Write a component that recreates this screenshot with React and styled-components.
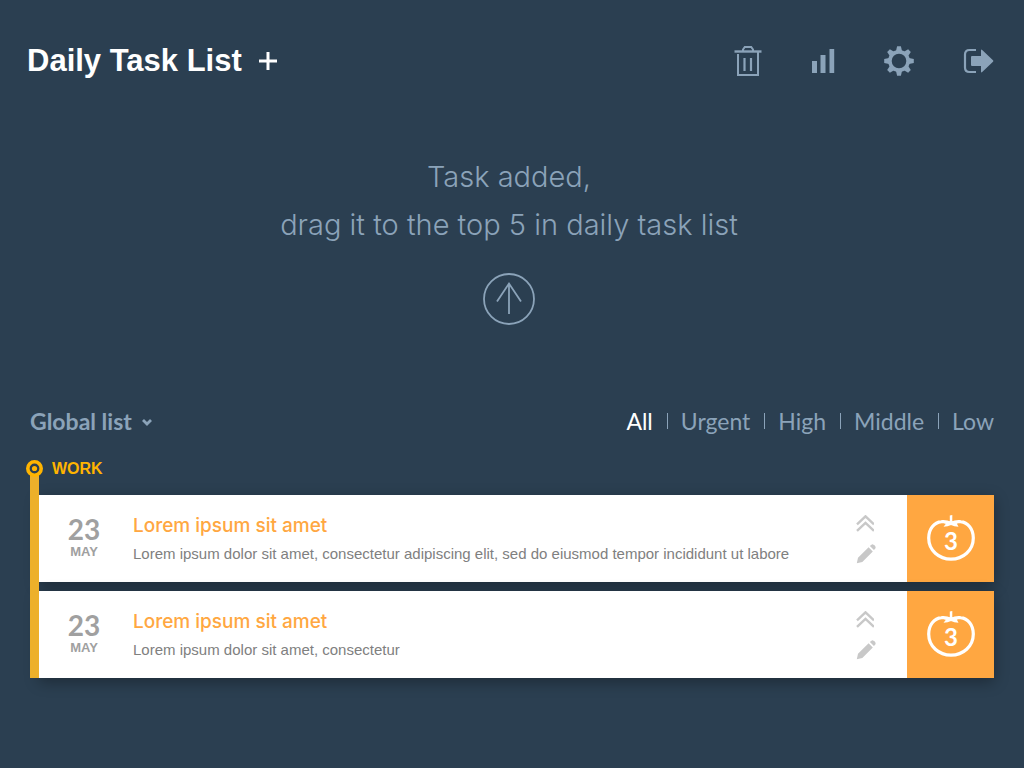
import React from 'react';
import styled, { createGlobalStyle } from 'styled-components';

const GlobalStyle = createGlobalStyle`
  *, *::before, *::after { box-sizing: border-box; }
  body { margin: 0; background: #2b3f51; font-family: "Liberation Sans", Arial, sans-serif; }
  h1, h2, h3, p, ul { margin: 0; padding: 0; }
  ul { list-style: none; }
  svg { display: block; }
  button { border: 0; padding: 0; background: none; color: inherit; font: inherit; cursor: pointer; }
`;

const Page = styled.div`
  min-height: 100vh;
  padding: 36px 30px 48px;
  background: #2b3f51;
  color: #8ba3b9;
`;

const Header = styled.header`
  display: flex;
  align-items: center;
  justify-content: space-between;
  height: 50px;
`;

const Brand = styled.div`
  display: flex;
  align-items: center;
  gap: 17px;
  margin-left: -3px;
  color: #fff;
`;

const Title = styled.h1`
  font-size: 31px;
  line-height: 48px;
  font-weight: 700;
`;

const Tools = styled.nav`
  display: flex;
  align-items: center;
  gap: 49px;
`;

const IconButton = styled.button`
  display: flex;
  align-items: center;
  justify-content: center;
`;

const Notice = styled.section`
  display: flex;
  flex-direction: column;
  align-items: center;
  padding-top: 67px;
  padding-right: 6px;
`;

const NoticeText = styled.p`
  font-family: Inter, "Liberation Sans", sans-serif;
  font-size: 29px;
  line-height: 48px;
  font-weight: 300;
  text-align: center;
`;

const DropButton = styled(IconButton)`
  margin-top: 24px;
`;

const ListHeader = styled.div`
  display: flex;
  align-items: center;
  justify-content: space-between;
  height: 32px;
  margin-top: 80px;
  font-family: Lato, "Noto Sans", sans-serif;
`;

const ListPicker = styled.button`
  display: flex;
  align-items: center;
  gap: 10px;
  font-size: 23px;
  line-height: 32px;
  font-weight: 700;
`;

const Filters = styled.ul`
  display: flex;
  align-items: center;
`;

const FilterItem = styled.li`
  display: flex;
  align-items: center;

  & + &::before {
    content: "";
    width: 1px;
    height: 16px;
    margin: 0 13px 0 14px;
    background: #8ba3b9;
  }
`;

const Filter = styled.button`
  font-size: 23px;
  line-height: 32px;
  color: ${(p) => (p.$active ? '#fff' : '#8ba3b9')};
`;

const Group = styled.section`
  margin-top: 22px;
`;

const GroupHeader = styled.div`
  position: relative;
  z-index: 2;
  display: flex;
  align-items: center;
  gap: 9px;
  height: 18px;
  margin-left: -4px;
  color: #ffb400;
`;

const GroupName = styled.h2`
  padding-top: 2px;
  font-size: 16px;
  line-height: 18px;
  font-weight: 700;
`;

const GroupBody = styled.div`
  display: flex;
  margin-top: -3px;
`;

const Rail = styled.div`
  position: relative;
  z-index: 1;
  width: 9px;
  background: #edb02a;
`;

const TaskList = styled.ul`
  display: flex;
  flex: 1;
  flex-direction: column;
  gap: 9px;
  min-width: 0;
  padding-top: 21px;
`;

const Card = styled.li`
  display: flex;
  height: 87px;
  background: #fff;
  box-shadow: 0 4px 14px rgba(0, 0, 0, 0.32);
`;

const DateBox = styled.div`
  display: flex;
  flex-direction: column;
  align-items: center;
  width: 90px;
  padding-top: 18px;
  color: #a0a0a0;
  font-weight: 700;
`;

const Day = styled.span`
  font-family: Lato, "Noto Sans", sans-serif;
  font-size: 28px;
  line-height: 32px;
`;

const Month = styled.span`
  font-size: 13px;
  line-height: 13px;
`;

const Details = styled.div`
  flex: 1;
  min-width: 0;
  padding: 19px 0 0 4px;
`;

const TaskTitle = styled.h3`
  font-family: Inter, "Liberation Sans", sans-serif;
  font-size: 19px;
  line-height: 24px;
  font-weight: 500;
  color: #ffa741;
`;

const TaskText = styled.p`
  margin-top: 6px;
  font-size: 15px;
  line-height: 20px;
  color: #808080;
`;

const Actions = styled.div`
  display: flex;
  flex-direction: column;
  align-items: flex-start;
  gap: 11px;
  padding: 20px 31px 0 0;
`;

const CountButton = styled.button`
  display: flex;
  align-items: center;
  justify-content: center;
  width: 87px;
  background: #ffa741;
  color: #fff;
`;

const Tomato = styled.span`
  display: grid;
  place-items: center;

  & > * { grid-area: 1 / 1; }
`;

const Count = styled.span`
  padding: 4px 0 0 1px;
  font-family: Lato, "Noto Sans", sans-serif;
  font-size: 24px;
  line-height: 24px;
  font-weight: 700;
`;

const PlusIcon = () => (
  <svg width="18" height="18" viewBox="0 0 18 18" fill="none" stroke="currentColor" strokeWidth="3">
    <path d="M9 0v18M0 9h18" />
  </svg>
);

const TrashIcon = () => (
  <svg width="28" height="32" viewBox="0 0 28 32" fill="none" stroke="currentColor" strokeWidth="2">
    <path d="M0.500 6.500h27" strokeWidth="2.400" />
    <path d="M9 6V4.500L10.800 2h6.400L19 4.500V6" />
    <path d="M4 9v21h20V7" />
    <path d="M10.500 13v13M17 13v13" strokeWidth="2.200" />
  </svg>
);

const ChartIcon = () => (
  <svg width="24" height="26" viewBox="0 0 24 26" fill="currentColor">
    <path d="M1 13h5v12H1zM9.500 7h5v18h-5zM18.500 1h4.700v24h-4.700z" />
  </svg>
);

const GearIcon = () => (
  <svg width="30" height="30" viewBox="-15 -15 30 30" fill="currentColor">
    <circle r="9.100" fill="none" stroke="currentColor" strokeWidth="3.600" />
    {[0, 45, 90, 135, 180, 225, 270, 315].map((a) => (
      <path key={a} d="M-3-10L-1.900-14.800h3.800L3-10z" transform={`rotate(${a})`} />
    ))}
  </svg>
);

const ExitIcon = () => (
  <svg width="31" height="26" viewBox="0 0 31 26">
    <path d="M13 2H6.500Q2 2 2 6.500v13Q2 24 6.500 24H13" fill="none" stroke="currentColor" strokeWidth="2.200" />
    <path d="M8 9q0-1 1-1h9V2.500q0-1.500 1.200-0.500L30 12.200q0.800 0.800 0 1.600L19.200 24q-1.200 1-1.200-0.500V18H9q-1 0-1-1z" fill="currentColor" />
  </svg>
);

const ArrowUpIcon = () => (
  <svg width="52" height="52" viewBox="0 0 52 52" fill="none" stroke="currentColor" strokeWidth="1.800">
    <circle cx="26" cy="26" r="25" />
    <path d="M26 41V10M14 28.500L26 10.500l12 18" />
  </svg>
);

const ChevronIcon = () => (
  <svg width="10" height="12" viewBox="0 0 10 12" fill="none" stroke="currentColor" strokeWidth="2.800">
    <path d="M1 5l4 4 4-4" />
  </svg>
);

const PinIcon = () => (
  <svg width="17" height="17" viewBox="0 0 17 17" fill="none">
    <circle cx="8.500" cy="8.500" r="6.700" stroke="currentColor" strokeWidth="3.600" />
    <circle cx="8.500" cy="8.500" r="2.600" fill="currentColor" />
  </svg>
);

const RaiseIcon = () => (
  <svg width="18" height="18" viewBox="0 0 18 18" fill="none" stroke="#c8c8c8" strokeWidth="2.400">
    <path d="M1 9.300l8.500-8 8.500 8M1 15.800l8.500-8 8.500 8" />
  </svg>
);

const PencilIcon = () => (
  <svg width="20" height="20" viewBox="0 0 20 20" fill="#c8c8c8">
    <path d="M0.800 19.200l1.200-5.500L12.600 3.300l4.200 4.200L6.300 18zM13.900 2.100l1.200-1.200q1-0.700 2-0.500 2.200 0.500 2.500 2.500 0.200 1.100-0.500 1.900l-1.200 1.300z" />
  </svg>
);

const TomatoIcon = () => (
  <svg width="48" height="48" viewBox="0 0 48 48" fill="none">
    <path d="M24 8.500C20.500 6.800 17.500 6.300 14.500 6.700 7 7.500 1.700 14 1.700 23 1.700 35.500 12 44.200 24 44.200S46.300 35.500 46.300 23C46.300 14 41 7.500 33.500 6.700 30.500 6.300 27.500 6.800 24 8.500z" stroke="#fff" strokeWidth="3.200" />
    <path d="M22.800 0.500L25.300 0v6.200q4.200 0.200 7.200 1l-2.700 1.300 1.700 3.300q-4.500-0.300-7.500-1.800-3 1.500-7.500 1.800l2.400-3-3.600-1.400q4-1 7.500-1.200z" fill="#fff" />
  </svg>
);

const tasks = [
  { id: 1, day: 23, month: 'MAY', title: 'Lorem ipsum sit amet', count: 3,
    text: 'Lorem ipsum dolor sit amet, consectetur adipiscing elit, sed do eiusmod tempor incididunt ut labore' },
  { id: 2, day: 23, month: 'MAY', title: 'Lorem ipsum sit amet', count: 3,
    text: 'Lorem ipsum dolor sit amet, consectetur' },
];

const filters = ['All', 'Urgent', 'High', 'Middle', 'Low'];

const Task = ({ task }) => (
  <Card>
    <DateBox>
      <Day>{task.day}</Day>
      <Month>{task.month}</Month>
    </DateBox>
    <Details>
      <TaskTitle>{task.title}</TaskTitle>
      <TaskText>{task.text}</TaskText>
    </Details>
    <Actions>
      <IconButton aria-label="Raise priority"><RaiseIcon /></IconButton>
      <IconButton aria-label="Edit task"><PencilIcon /></IconButton>
    </Actions>
    <CountButton>
      <Tomato>
        <TomatoIcon />
        <Count>{task.count}</Count>
      </Tomato>
    </CountButton>
  </Card>
);

export default function App() {
  const [active, setActive] = React.useState('All');
  return (
    <Page>
      <GlobalStyle />
      <Header>
        <Brand>
          <Title>Daily Task List</Title>
          <IconButton aria-label="Add task"><PlusIcon /></IconButton>
        </Brand>
        <Tools aria-label="Tools">
          <IconButton aria-label="Trash"><TrashIcon /></IconButton>
          <IconButton aria-label="Statistics"><ChartIcon /></IconButton>
          <IconButton aria-label="Settings"><GearIcon /></IconButton>
          <IconButton aria-label="Log out"><ExitIcon /></IconButton>
        </Tools>
      </Header>
      <Notice>
        <NoticeText>Task added,<br />drag it to the top 5 in daily task list</NoticeText>
        <DropButton aria-label="Move to daily list"><ArrowUpIcon /></DropButton>
      </Notice>
      <ListHeader>
        <ListPicker>Global list <ChevronIcon /></ListPicker>
        <Filters>
          {filters.map((name) => (
            <FilterItem key={name}>
              <Filter $active={name === active} aria-pressed={name === active} onClick={() => setActive(name)}>{name}</Filter>
            </FilterItem>
          ))}
        </Filters>
      </ListHeader>
      <Group>
        <GroupHeader>
          <PinIcon />
          <GroupName>WORK</GroupName>
        </GroupHeader>
        <GroupBody>
          <Rail />
          <TaskList>
            {tasks.map((task) => <Task key={task.id} task={task} />)}
          </TaskList>
        </GroupBody>
      </Group>
    </Page>
  );
}
